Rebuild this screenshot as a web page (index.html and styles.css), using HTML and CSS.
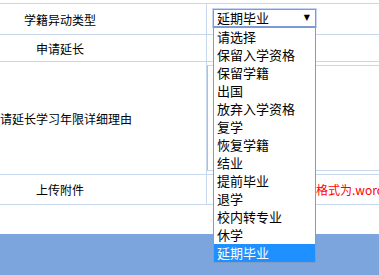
FILE: index.html
```html
<!doctype html>
<html lang="zh-CN">
<head>
  <meta charset="utf-8">
  <title>学籍异动申请</title>
  <link rel="stylesheet" href="styles.css">
</head>
<body>

<div class="page">
  <table class="form">
    <colgroup>
      <col class="col-label">
      <col class="col-value">
    </colgroup>
    <tr class="row-type">
      <td class="label">学籍异动类型</td>
      <td class="value">
        <div class="select-wrap">
          <div class="select-box">
            <span class="select-text">延期毕业</span>
            <span class="select-arrow">▼</span>
          </div>
          <ul class="select-list">
            <li>请选择</li>
            <li>保留入学资格</li>
            <li>保留学籍</li>
            <li>出国</li>
            <li>放弃入学资格</li>
            <li>复学</li>
            <li>恢复学籍</li>
            <li>结业</li>
            <li>提前毕业</li>
            <li>退学</li>
            <li>校内转专业</li>
            <li>休学</li>
            <li class="active">延期毕业</li>
          </ul>
        </div>
      </td>
    </tr>
    <tr class="row-extend">
      <td class="label">申请延长</td>
      <td class="value"></td>
    </tr>
    <tr class="row-reason">
      <td class="label">申请延长学习年限详细理由</td>
      <td class="value"><div class="textarea"></div></td>
    </tr>
    <tr class="row-file">
      <td class="label">上传附件</td>
      <td class="value"><span class="note">格式为.word</span></td>
    </tr>
  </table>
  <div class="blank"></div>
  <div class="footer"></div>
</div>

</body>
</html>
```

FILE: styles.css
```css
body {
  margin: 0;
  padding: 0;
  background: #fff;
  overflow: hidden;
  font-family: "Noto Sans CJK SC", "Microsoft YaHei", sans-serif;
  color: #000;
}

.page {
  width: 379px;
  height: 275px;
  overflow: hidden;
}

.form {
  border-collapse: collapse;
  table-layout: fixed;
  width: 560px;
  margin-top: 3px;
  margin-left: -87px;
}

.col-label {
  width: 293px;
}

.form td {
  border: 1px solid #c8d8ec;
  padding: 0;
  font-size: 12px;
  vertical-align: middle;
}

.label {
  text-align: center;
}

.row-type td {
  height: 30px;
}

.row-extend td {
  height: 26px;
}

.row-reason td {
  height: 112px;
}

.row-file td {
  height: 29px;
}

.row-type .value {
  vertical-align: top;
}

.select-wrap {
  position: relative;
  margin: 5px 0 0 6px;
  width: 103px;
}

.select-box {
  height: 16px;
  border: 1px solid #7b9bd2;
  box-shadow: 0 0 0 1px #c3d5f2;
  display: flex;
  align-items: center;
  justify-content: space-between;
  padding: 0 5px 0 3px;
  font-size: 13px;
  line-height: 16px;
  background: #fff;
}

.select-arrow {
  font-size: 8px;
  font-family: "DejaVu Sans", sans-serif;
}

.select-list {
  position: absolute;
  top: 18px;
  left: 0;
  width: 101px;
  margin: 0;
  padding: 0;
  list-style: none;
  background: #fff;
  border: 1px solid #7f9cc9;
  z-index: 2;
}

.select-list li {
  height: 18px;
  line-height: 18px;
  padding-left: 3px;
  font-size: 13px;
  white-space: nowrap;
}

.select-list .active {
  background: #1e90ff;
  color: #fff;
}

.textarea {
  height: 104px;
  margin: 3px 0;
  border: 1px solid #c8d8ec;
  border-left-color: #a9c1e3;
}

.note {
  color: #ff0000;
  font-size: 12px;
  padding-left: 109px;
  white-space: nowrap;
}

.blank {
  height: 29px;
}

.footer {
  height: 60px;
  background: #7ca5de;
}
```
